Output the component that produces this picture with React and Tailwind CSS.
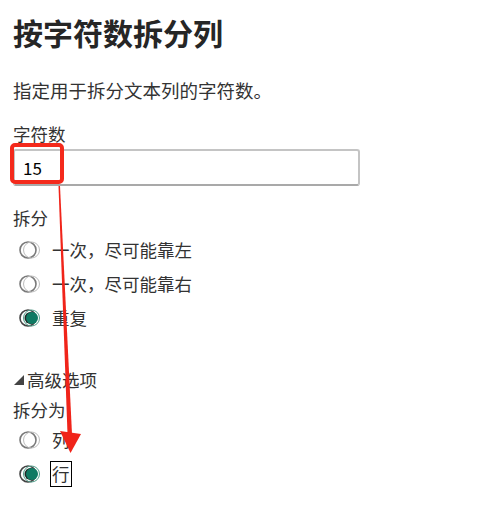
import React from "react";

function Radio({ checked }) {
  return (
    <svg width="25" height="20" viewBox="0 0 25 20" className="shrink-0">
      {checked ? (
        <>
          <circle cx="9" cy="10" r="8" fill="none" stroke="#444" strokeWidth="1.6" />
          <circle cx="12.5" cy="10" r="8" fill="none" stroke="#4f9e8a" strokeWidth="1" />
          <circle cx="11.5" cy="10" r="6" fill="#1d2a27" />
          <circle cx="13" cy="10" r="6" fill="#0f7a63" />
        </>
      ) : (
        <>
          <circle cx="9" cy="10" r="8" fill="none" stroke="#7a7a7a" strokeWidth="1.6" />
          <circle cx="12.5" cy="10" r="8" fill="none" stroke="#bdbdbd" strokeWidth="1" />
        </>
      )}
    </svg>
  );
}

function Option({ label, checked, focused }) {
  return (
    <div className="flex items-center h-[34px] pl-[6px] gap-[6px]">
      <Radio checked={checked} />
      {focused ? (
        <span className="border border-black px-[1px] leading-[24px]">{label}</span>
      ) : (
        <span className="leading-[24px] pl-[2px]">{label}</span>
      )}
    </div>
  );
}

export default function App() {
  return (
    <div
      className="relative w-[483px] h-[520px] bg-white text-[#333] overflow-hidden"
      style={{ fontFamily: '"Noto Sans CJK SC", "Noto Sans", sans-serif' }}
    >
      <div className="px-[13px] text-[17.5px]">
        <h1 className="mt-[12px] h-[40px] leading-[40px] text-[30px] font-bold text-[#262626]">
          按字符数拆分列
        </h1>
        <p className="mt-[25px] h-[26px] leading-[26px] text-[18.5px]">
          指定用于拆分文本列的字符数。
        </p>
        <div className="mt-[19px] h-[24px] leading-[24px]">字符数</div>
        <div className="relative mt-[3px] w-[347px] h-[37px] border-2 border-[#c4c4c4] border-b-[#a9a9a9] rounded-[3px] flex items-center pl-[8px] text-[17px] text-black">
          15
          <div className="absolute left-[-5px] top-[-8px] w-[54px] h-[41px] border-[4px] border-[#f42a1c] rounded-[5px]" />
        </div>
        <div className="mt-[20px] h-[24px] leading-[24px]">拆分</div>
        <div className="mt-[3px]">
          <Option label="一次，尽可能靠左" />
          <Option label="一次，尽可能靠右" />
          <Option label="重复" checked />
        </div>
        <div className="mt-[33px] h-[24px] flex items-center gap-[3px]">
          <svg width="10" height="10" viewBox="0 0 10 10" className="ml-[1px]">
            <polygon points="10,0 10,10 0,10" fill="#444" />
          </svg>
          <span className="leading-[24px]">高级选项</span>
        </div>
        <div className="mt-[6px] h-[24px] leading-[24px]">拆分为</div>
        <div className="mt-[1px]">
          <Option label="列" />
          <Option label="行" checked focused />
        </div>
      </div>
      <svg
        className="absolute left-0 top-0 pointer-events-none"
        width="483"
        height="520"
        viewBox="0 0 483 520"
      >
        <polygon points="58.5,186 60,186 72,434 67.5,434" fill="#f0241a" />
        <polygon points="60,431 81,434 70.5,453" fill="#f0241a" />
      </svg>
    </div>
  );
}
